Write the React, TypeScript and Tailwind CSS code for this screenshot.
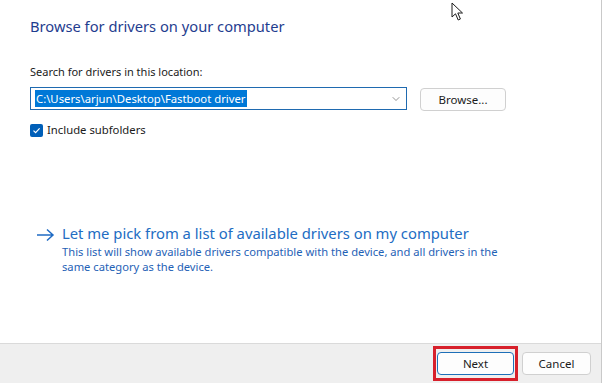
import { ChevronDown } from "lucide-react";

function DialogButton({ label, primary }: { label: string; primary?: boolean }) {
  return (
    <button
      type="button"
      className={
        "flex h-[23px] items-center justify-center rounded-[4px] border bg-[#fdfdfd] text-[11.5px] text-[#1b1b1b] " +
        (primary ? "w-[77px] border-[#1d6fb8]" : "w-[69px] border-[#d0d0d0]")
      }
    >
      {label}
    </button>
  );
}

export default function App() {
  return (
    <div
      className="flex h-[383px] w-[604px] bg-white"
      style={{ fontFamily: '"Segoe UI", "Noto Sans", "Open Sans", sans-serif' }}
    >
      <div className="flex w-[602px] flex-col border-r border-[#c9c9c9]">
        <div className="relative flex h-[343px] flex-col pl-[30px]">
          {/* mouse pointer */}
          <svg
            className="absolute left-[451px] top-[2px]"
            width="13"
            height="20"
            viewBox="0 0 13 20"
          >
            <path
              d="M1 1 L1 15 L4.5 11.8 L7.2 18 L9.4 17 L6.8 11 L11.5 11 Z"
              fill="white"
              stroke="#1a1a1a"
              strokeWidth="1"
              strokeLinejoin="round"
            />
          </svg>

          <h1 className="mt-[15px] text-[14.7px] leading-[22px] text-[#1f3d8f]">
            Browse for drivers on your computer
          </h1>

          <p className="mt-[27px] text-[11px] leading-[16px] text-[#1b1b1b]">
            Search for drivers in this location:
          </p>

          <div className="mt-[7px] flex items-start gap-[13px]">
            <div className="flex h-[23px] w-[377px] items-center justify-between border border-[#1f6ab0] bg-white pl-[4px] pr-[4px]">
              <span className="bg-[#0078d7] px-[1px] text-[11.3px] leading-[17px] text-white">
                C:\Users\arjun\Desktop\Fastboot driver
              </span>
              <ChevronDown size={12} strokeWidth={1.3} className="text-[#5a5a5a]" />
            </div>
            <div className="mt-[1px]">
              <button
                type="button"
                className="flex h-[23px] w-[86px] items-center justify-center rounded-[4px] border border-[#d0d0d0] bg-[#fdfdfd] text-[11.5px] text-[#1b1b1b]"
              >
                Browse...
              </button>
            </div>
          </div>

          <label className="mt-[11px] flex items-center gap-[4px]">
            <span className="flex h-[13px] w-[13px] items-center justify-center rounded-[2px] bg-[#005fb8]">
              <svg width="9" height="9" viewBox="0 0 9 9">
                <path d="M1.5 4.6 L3.6 6.6 L7.6 2.4" fill="none" stroke="white" strokeWidth="1.2" />
              </svg>
            </span>
            <span className="text-[11.3px] leading-[16px] text-[#1b1b1b]">Include subfolders</span>
          </label>

          <div className="mt-[85px] flex items-start gap-[7px] pl-[6px]">
            <svg width="19" height="14" viewBox="0 0 19 14" className="mt-[5px] shrink-0">
              <path d="M1 7 H17 M11 1.5 L17 7 L11 12.5" fill="none" stroke="#1f6bc4" strokeWidth="1.5" />
            </svg>
            <div className="flex flex-col">
              <span className="text-[14.8px] leading-[21px] text-[#226dc3]">
                Let me pick from a list of available drivers on my computer
              </span>
              <span className="w-[445px] text-[11.2px] leading-[15px] text-[#1f62b6]">
                This list will show available drivers compatible with the device, and all drivers in the
                same category as the device.
              </span>
            </div>
          </div>
        </div>

        <div className="flex flex-1 items-center justify-end gap-[4px] border-t border-[#dadada] bg-[#efefef] pr-[10px]">
          <div className="flex h-[35px] w-[85px] items-center justify-center border-[3px] border-[#d7202b]">
            <DialogButton label="Next" primary />
          </div>
          <DialogButton label="Cancel" />
        </div>
      </div>
    </div>
  );
}
